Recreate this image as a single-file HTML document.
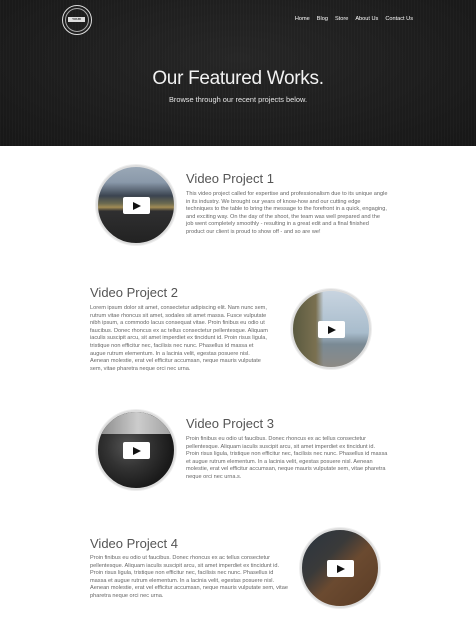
<!DOCTYPE html>
<html><head><meta charset="utf-8"><style>
*{margin:0;padding:0;box-sizing:border-box}
body{width:476px;height:626px;overflow:hidden;background:#fff;font-family:"Liberation Sans",sans-serif;position:relative}
.hdr{position:absolute;left:0;top:0;width:476px;height:146px;background:#1d1d1d;background-image:repeating-linear-gradient(90deg,rgba(255,255,255,.02) 0 1px,transparent 1px 3px),radial-gradient(ellipse at 50% 40%,#262626,#171717)}
.logo{position:absolute;left:62px;top:5px;width:30px;height:30px;border:1.5px solid #ddd;border-radius:50%}
.logo:before{content:"";position:absolute;left:2px;top:2px;right:2px;bottom:2px;border:0.5px solid #aaa;border-radius:50%}
.logo span{position:absolute;left:5px;top:11px;width:17px;height:5px;background:#ddd;font-size:3px;color:#222;text-align:center;line-height:5px;font-weight:bold}
.nav{position:absolute;top:16px;right:63px;font-size:5.6px;color:#fff;white-space:nowrap}
.nav span{margin-left:7px}
h1{position:absolute;top:68px;width:100%;text-align:center;color:#f2f2f2;font-weight:normal;font-size:19px;letter-spacing:-0.3px}
.sub{position:absolute;top:95px;width:100%;text-align:center;color:#e6e6e6;font-size:7.4px}
.t{position:absolute;font-size:13px;color:#555;font-weight:normal}
.p{position:absolute;font-size:5.6px;line-height:7.6px;color:#666}
.c{position:absolute;width:80px;height:80px;border-radius:50%;border:2.5px solid #ddd;box-shadow:0 0 0 1px #eee;overflow:hidden}
.pl{position:absolute;left:25px;top:30px;width:27px;height:17px;background:#fff;border-radius:2px}
.pl:after{content:"";position:absolute;left:10px;top:4.5px;border-left:8px solid #111;border-top:4px solid transparent;border-bottom:4px solid transparent}
</style></head><body>
<div class="hdr">
<div class="logo"><span>YOUR LOGO</span></div>
<div class="nav"><span>Home</span><span>Blog</span><span>Store</span><span>About Us</span><span>Contact Us</span></div>
<h1>Our Featured Works.</h1>
<div class="sub">Browse through our recent projects below.</div>
</div>

<div class="c" style="left:96px;top:165px;background:linear-gradient(180deg,#9aa8b6 0%,#8a99aa 20%,#3b4450 38%,#6b6a50 48%,#a28c55 53%,#2f2f30 58%,#222 100%)"><div class="pl"></div></div>
<div class="t" style="left:186px;top:171px">Video Project 1</div>
<div class="p" style="left:186px;top:191px;width:202px">This video project called for expertise and professionalism due to its unique angle in its industry. We brought our years of know-how and our cutting edge techniques to the table to bring the message to the forefront in a quick, engaging, and exciting way. On the day of the shoot, the team was well prepared and the job went completely smoothly - resulting in a great edit and a final finished product our client is proud to show off - and so are we!</div>

<div class="t" style="left:90px;top:285px">Video Project 2</div>
<div class="p" style="left:90px;top:305px;width:180px">Lorem ipsum dolor sit amet, consectetur adipiscing elit. Nam nunc sem, rutrum vitae rhoncus sit amet, sodales sit amet massa. Fusce vulputate nibh ipsum, a commodo lacus consequat vitae. Proin finibus eu odio ut faucibus. Donec rhoncus ex ac tellus consectetur pellentesque. Aliquam iaculis suscipit arcu, sit amet imperdiet ex tincidunt id. Proin risus ligula, tristique non efficitur nec, facilisis nec nunc. Phasellus id massa et augue rutrum elementum. In a lacinia velit, egestas posuere nisl. Aenean molestie, erat vel efficitur accumsan, neque mauris vulputate sem, vitae pharetra neque orci nec urna.</div>
<div class="c" style="left:291px;top:289px;background:linear-gradient(90deg,#5a5a40 0%,#7a7050 30%,transparent 40%),linear-gradient(180deg,#c8d4e0 0%,#a8bccc 55%,#7a8a95 70%,#8d8a85 100%)"><div class="pl"></div></div>

<div class="c" style="left:96px;top:410px;background:radial-gradient(circle at 40% 45%,#555 0%,#333 35%,#1a1a1a 70%),#222"><div style="position:absolute;left:0;top:0;width:80px;height:22px;background:linear-gradient(90deg,#888,#ccc,#999)"></div><div class="pl"></div></div>
<div class="t" style="left:186px;top:416px">Video Project 3</div>
<div class="p" style="left:186px;top:436px;width:202px">Proin finibus eu odio ut faucibus. Donec rhoncus ex ac tellus consectetur pellentesque. Aliquam iaculis suscipit arcu, sit amet imperdiet ex tincidunt id. Proin risus ligula, tristique non efficitur nec, facilisis nec nunc. Phasellus id massa et augue rutrum elementum. In a lacinia velit, egestas posuere nisl. Aenean molestie, erat vel efficitur accumsan, neque mauris vulputate sem, vitae pharetra neque orci nec urna.s.</div>

<div class="t" style="left:90px;top:536px">Video Project 4</div>
<div class="p" style="left:90px;top:555px;width:200px">Proin finibus eu odio ut faucibus. Donec rhoncus ex ac tellus consectetur pellentesque. Aliquam iaculis suscipit arcu, sit amet imperdiet ex tincidunt id. Proin risus ligula, tristique non efficitur nec, facilisis nec nunc. Phasellus id massa et augue rutrum elementum. In a lacinia velit, egestas posuere nisl. Aenean molestie, erat vel efficitur accumsan, neque mauris vulputate sem, vitae pharetra neque orci nec urna.</div>
<div class="c" style="left:300px;top:528px;background:linear-gradient(135deg,#2a3440 0%,#3a3a3a 35%,#6b4a30 55%,#5a3c25 100%)"><div class="pl"></div></div>
</body></html>
